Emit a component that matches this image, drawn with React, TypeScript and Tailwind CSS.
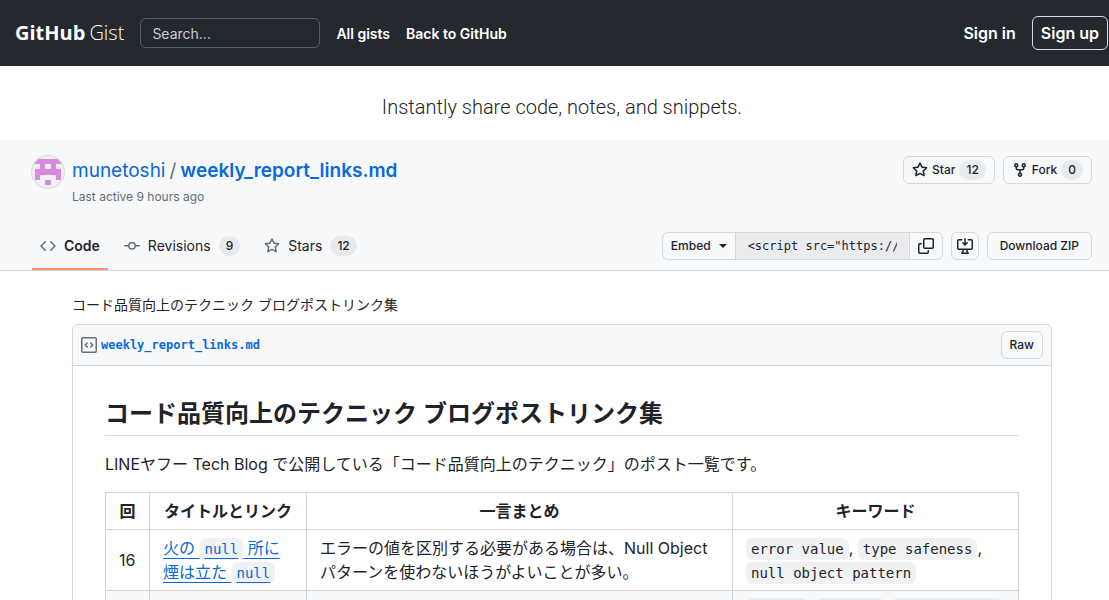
import type { ReactNode } from "react";

const icons = {
  code: [
    "m11.28 3.22 4.25 4.25a.75.75 0 0 1 0 1.06l-4.25 4.25a.749.749 0 0 1-1.275-.326.749.749 0 0 1 .215-.734L13.94 8l-3.72-3.72a.749.749 0 0 1 .326-1.275.749.749 0 0 1 .734.215Zm-6.56 0a.751.751 0 0 1 1.042.018.751.751 0 0 1 .018 1.042L2.06 8l3.72 3.72a.749.749 0 0 1-.326 1.275.749.749 0 0 1-.734-.215L.47 8.53a.75.75 0 0 1 0-1.06Z",
  ],
  commit: [
    "M11.93 8.5a4.002 4.002 0 0 1-7.86 0H.75a.75.75 0 0 1 0-1.5h3.32a4.002 4.002 0 0 1 7.86 0h3.32a.75.75 0 0 1 0 1.5Zm-1.43-.75a2.5 2.5 0 1 0-5 0 2.5 2.5 0 0 0 5 0Z",
  ],
  star: [
    "M8 .25a.75.75 0 0 1 .673.418l1.882 3.815 4.21.612a.75.75 0 0 1 .416 1.279l-3.046 2.97.719 4.192a.751.751 0 0 1-1.088.791L8 12.347l-3.766 1.98a.75.75 0 0 1-1.088-.79l.72-4.194L.818 6.374a.75.75 0 0 1 .416-1.28l4.21-.611L7.327.668A.75.75 0 0 1 8 .25Zm0 2.445L6.615 5.5a.75.75 0 0 1-.564.41l-3.097.45 2.24 2.184a.75.75 0 0 1 .216.664l-.528 3.084 2.769-1.456a.75.75 0 0 1 .698 0l2.77 1.456-.53-3.084a.75.75 0 0 1 .216-.664l2.24-2.183-3.096-.45a.75.75 0 0 1-.564-.41L8 2.694Z",
  ],
  fork: [
    "M5 5.372v.878c0 .414.336.75.75.75h4.5a.75.75 0 0 0 .75-.75v-.878a2.25 2.25 0 1 1 1.5 0v.878a2.25 2.25 0 0 1-2.25 2.25h-1.5v2.128a2.251 2.251 0 1 1-1.5 0V8.5h-1.5A2.25 2.25 0 0 1 3.5 6.25v-.878a2.25 2.25 0 1 1 1.5 0ZM5 3.25a.75.75 0 1 0-1.5 0 .75.75 0 0 0 1.5 0Zm6.75.75a.75.75 0 1 0 0-1.5.75.75 0 0 0 0 1.5Zm-3 8.75a.75.75 0 1 0-1.5 0 .75.75 0 0 0 1.5 0Z",
  ],
  copy: [
    "M0 6.75C0 5.784.784 5 1.75 5h1.5a.75.75 0 0 1 0 1.5h-1.5a.25.25 0 0 0-.25.25v7.5c0 .138.112.25.25.25h7.5a.25.25 0 0 0 .25-.25v-1.5a.75.75 0 0 1 1.5 0v1.5A1.75 1.75 0 0 1 9.25 16h-7.5A1.75 1.75 0 0 1 0 14.25Z",
    "M5 1.75C5 .784 5.784 0 6.75 0h7.5C15.216 0 16 .784 16 1.75v7.5A1.75 1.75 0 0 1 14.25 11h-7.5A1.75 1.75 0 0 1 5 9.25Zm1.75-.25a.25.25 0 0 0-.25.25v7.5c0 .138.112.25.25.25h7.5a.25.25 0 0 0 .25-.25v-7.5a.25.25 0 0 0-.25-.25Z",
  ],
  desktop: [
    "M8.75 5.19l.97-.97a.75.75 0 0 1 1.06 1.06l-2.25 2.25a.75.75 0 0 1-1.06 0L5.22 5.28a.75.75 0 0 1 1.06-1.06l.97.97V.75a.75.75 0 0 1 1.5 0Z",
    "M1.573 2.573a.25.25 0 0 0-.073.177v7.5a.25.25 0 0 0 .25.25h12.5a.25.25 0 0 0 .25-.25v-7.5a.25.25 0 0 0-.25-.25h-3a.75.75 0 1 1 0-1.5h3A1.75 1.75 0 0 1 16 2.75v7.5A1.75 1.75 0 0 1 14.25 12h-3.727c.099 1.041.52 1.872 1.292 2.757A.752.752 0 0 1 11.25 16h-6.5a.75.75 0 0 1-.565-1.243c.772-.885 1.192-1.716 1.292-2.757H1.75A1.75 1.75 0 0 1 0 10.25v-7.5A1.75 1.75 0 0 1 1.75 1h3a.75.75 0 0 1 0 1.5h-3a.25.25 0 0 0-.177.073ZM6.982 12a5.72 5.72 0 0 1-.765 2.5h3.566a5.72 5.72 0 0 1-.765-2.5H6.982Z",
  ],
  codeSquare: [
    "M0 1.75C0 .784.784 0 1.75 0h12.5C15.216 0 16 .784 16 1.75v12.5A1.75 1.75 0 0 1 14.25 16H1.75A1.75 1.75 0 0 1 0 14.25Zm1.75-.25a.25.25 0 0 0-.25.25v12.5c0 .138.112.25.25.25h12.5a.25.25 0 0 0 .25-.25V1.75a.25.25 0 0 0-.25-.25Zm7.47 3.97a.75.75 0 0 1 1.06 0l2 2a.75.75 0 0 1 0 1.06l-2 2a.749.749 0 0 1-1.275-.326.749.749 0 0 1 .215-.734L10.69 8 9.22 6.53a.75.75 0 0 1 0-1.06ZM6.78 6.53 5.31 8l1.47 1.47a.749.749 0 0 1-.326 1.275.749.749 0 0 1-.734-.215l-2-2a.75.75 0 0 1 0-1.06l2-2a.751.751 0 0 1 1.042.018.751.751 0 0 1 .018 1.042Z",
  ],
};

function Icon({ name, className = "" }: { name: keyof typeof icons; className?: string }) {
  return (
    <svg viewBox="0 0 16 16" fill="currentColor" aria-hidden="true" className={`size-4 shrink-0 ${className}`}>
      {icons[name].map((d) => (
        <path key={d} d={d} />
      ))}
    </svg>
  );
}

function Avatar() {
  return (
    <svg viewBox="0 0 32 32" aria-hidden="true" className="size-8 shrink-0 rounded-full bg-[#f0f0f0] ring-1 ring-[#d8dde2]">
      <path
        fill="#d98ade"
        d="M3 3h26v5h-5v5h5v11h-5v-5H8v5H3V13h5V8H3ZM13 8v5h6V8ZM13 24h6v5h-6Z"
        fillRule="evenodd"
      />
    </svg>
  );
}

function Button({ children, className = "px-3", label }: { children: ReactNode; className?: string; label?: string }) {
  return (
    <button
      type="button"
      aria-label={label}
      className={`flex h-7 items-center rounded-md border border-[#d5d8da] bg-[#f6f8fa] text-xs font-medium whitespace-nowrap ${className}`}
    >
      {children}
    </button>
  );
}

function Count({ children }: { children: ReactNode }) {
  return <span className="min-w-5 rounded-full bg-[#e7eaed] px-[7px] text-center text-xs leading-5 font-medium">{children}</span>;
}

function Code({ children }: { children: ReactNode }) {
  return (
    <code className="rounded-md bg-[#eff1f3] px-[5px] py-[3px] font-['DejaVu_Sans_Mono',monospace] text-sm leading-none">
      {children}
    </code>
  );
}

const cell = "border border-[#d1d5da] px-[13px] py-[6px]";

export default function App() {
  return (
    <div className="min-h-screen bg-white font-['Inter','Noto_Sans_CJK_JP',sans-serif] text-[#1f2328]">
      <header className="flex h-[66px] items-center bg-[#24292f] pr-px pl-[15px] text-white">
        <a
          href="#"
          className="flex items-baseline gap-1 font-['Open_Sans',sans-serif] text-xl leading-8"
        >
          <span className="font-bold">GitHub</span>
          <span className="font-light">Gist</span>
        </a>
        <input
          type="text"
          aria-label="Search"
          placeholder="Search…"
          className="ml-4 h-[30px] w-[180px] rounded-md border border-[#57606a] bg-transparent px-[11px] text-sm placeholder:text-[#c9ccd0]"
        />
        <nav className="ml-4 flex gap-4 pt-[2px] text-sm font-semibold">
          <a href="#">All gists</a>
          <a href="#">Back to GitHub</a>
        </nav>
        <div className="ml-auto flex items-center gap-4 font-semibold">
          <a href="#">Sign in</a>
          <a href="#" className="rounded-md border border-[#d8dadc] px-2 py-1">
            Sign up
          </a>
        </div>
      </header>

      <p className="pt-[26px] pb-[18px] pl-[15px] text-center font-['Roboto',sans-serif] text-xl leading-[30px] font-light">
        Instantly share code, notes, and snippets.
      </p>

      <section className="border-b border-[#d0d7de] bg-[#f6f8fa] pr-[17px] pl-8">
        <div className="flex items-start justify-between pt-4">
          <div className="flex gap-2">
            <Avatar />
            <div>
              <h1 className="flex gap-1 text-[19px] leading-[30px] text-[#0969da]">
                <a href="#">munetoshi</a>
                <span className="text-[#656d76]">/</span>
                <a href="#" className="font-semibold">weekly_report_links.md</a>
              </h1>
              <p className="text-xs leading-[22px] text-[#656d76]">Last active 9 hours ago</p>
            </div>
          </div>
          <div className="flex gap-2">
            <Button className="gap-1 px-2">
              <Icon name="star" />
              Star
              <Count>12</Count>
            </Button>
            <Button className="gap-1 px-2">
              <Icon name="fork" />
              Fork
              <Count>0</Count>
            </Button>
          </div>
        </div>

        <div className="mt-[14px] flex items-start justify-between">
          <nav className="flex gap-2 text-sm leading-6">
            <a href="#" className="flex h-12 items-center gap-2 border-b-2 border-[#fd8c73] px-2 pt-[2px] font-semibold">
              <Icon name="code" className="text-[#656d76]" />
              Code
            </a>
            <a href="#" className="flex h-12 items-center gap-2 border-b-2 border-transparent px-2 pt-[2px]">
              <Icon name="commit" className="text-[#656d76]" />
              Revisions
              <Count>9</Count>
            </a>
            <a href="#" className="flex h-12 items-center gap-2 border-b-2 border-transparent px-2 pt-[2px]">
              <Icon name="star" className="text-[#656d76]" />
              Stars
              <Count>12</Count>
            </a>
          </nav>
          <div className="flex gap-2 pt-[10px]">
            <div className="flex">
              <Button className="gap-2 rounded-r-none border-r-0 px-2">
                Embed
                <span className="border-x-4 border-t-4 border-x-transparent border-t-current" />
              </Button>
              <input
                type="text"
                readOnly
                aria-label="Embed script"
                value={'<script src="https://gist.github.com/munetoshi/weekly_report_links.js"></script>'}
                className="h-7 w-[175px] border border-[#d5d8da] bg-[#e9ebef] px-3 font-['DejaVu_Sans_Mono',monospace] text-xs"
              />
              <Button className="rounded-l-none border-l-0 px-2" label="Copy">
                <Icon name="copy" />
              </Button>
            </div>
            <Button className="px-[5px]" label="Open in desktop">
              <Icon name="desktop" />
            </Button>
            <Button>Download ZIP</Button>
          </div>
        </div>
      </section>

      <main className="pt-6 pr-[57px] pl-[72px]">
        <p className="text-sm leading-5">コード品質向上のテクニック ブログポストリンク集</p>
        <article className="mt-[9px] rounded-md border border-[#d0d7de]">
          <div className="flex h-[41px] items-center justify-between rounded-t-md border-b border-[#d0d7de] bg-[#f6f8fa] px-2">
            <a
              href="#"
              className="flex items-center gap-1 font-['DejaVu_Sans_Mono',monospace] text-xs font-bold text-[#0969da]"
            >
              <Icon name="codeSquare" className="text-[#656d76]" />
              weekly_report_links.md
            </a>
            <Button className="px-2">Raw</Button>
          </div>
          <div className="px-8 pt-8">
            <h2 className="border-b border-[#d8dee4] pb-[5px] text-2xl leading-8 font-semibold">
              コード品質向上のテクニック ブログポストリンク集
            </h2>
            <p className="my-4 leading-6">
              LINEヤフー Tech Blog で公開している「コード品質向上のテクニック」のポスト一覧です。
            </p>
            <table className="w-full table-fixed border-collapse leading-6">
              <colgroup>
                <col className="w-11" />
                <col className="w-[157px]" />
                <col />
                <col className="w-[286px]" />
              </colgroup>
              <thead>
                <tr>
                  {["回", "タイトルとリンク", "一言まとめ", "キーワード"].map((h) => (
                    <th key={h} className={`${cell} font-semibold`}>
                      {h}
                    </th>
                  ))}
                </tr>
              </thead>
              <tbody>
                <tr>
                  <td className={cell}>16</td>
                  <td className={cell}>
                    <a href="#" className="text-[#0969da] underline underline-offset-4">
                      火の <Code>null</Code> 所に煙は立た <Code>null</Code>
                    </a>
                  </td>
                  <td className={cell}>
                    エラーの値を区別する必要がある場合は、Null Object パターンを使わないほうがよいことが多い。
                  </td>
                  <td className={cell}>
                    <Code>error value</Code>, <Code>type safeness</Code>, <Code>null object pattern</Code>
                  </td>
                </tr>
                <tr className="bg-[#f6f8fa]">
                  <td className={cell} />
                  <td className={cell} />
                  <td className={cell} />
                  <td className={cell}>
                    <div className="flex h-6 items-center gap-2">
                      <span className="h-[22px] w-[62px] rounded-md bg-[#eaedf0]" />
                      <span className="h-[22px] w-[68px] rounded-md bg-[#eaedf0]" />
                      <span className="h-[22px] w-[110px] rounded-md bg-[#eaedf0]" />
                    </div>
                  </td>
                </tr>
              </tbody>
            </table>
          </div>
        </article>
      </main>
    </div>
  );
}
